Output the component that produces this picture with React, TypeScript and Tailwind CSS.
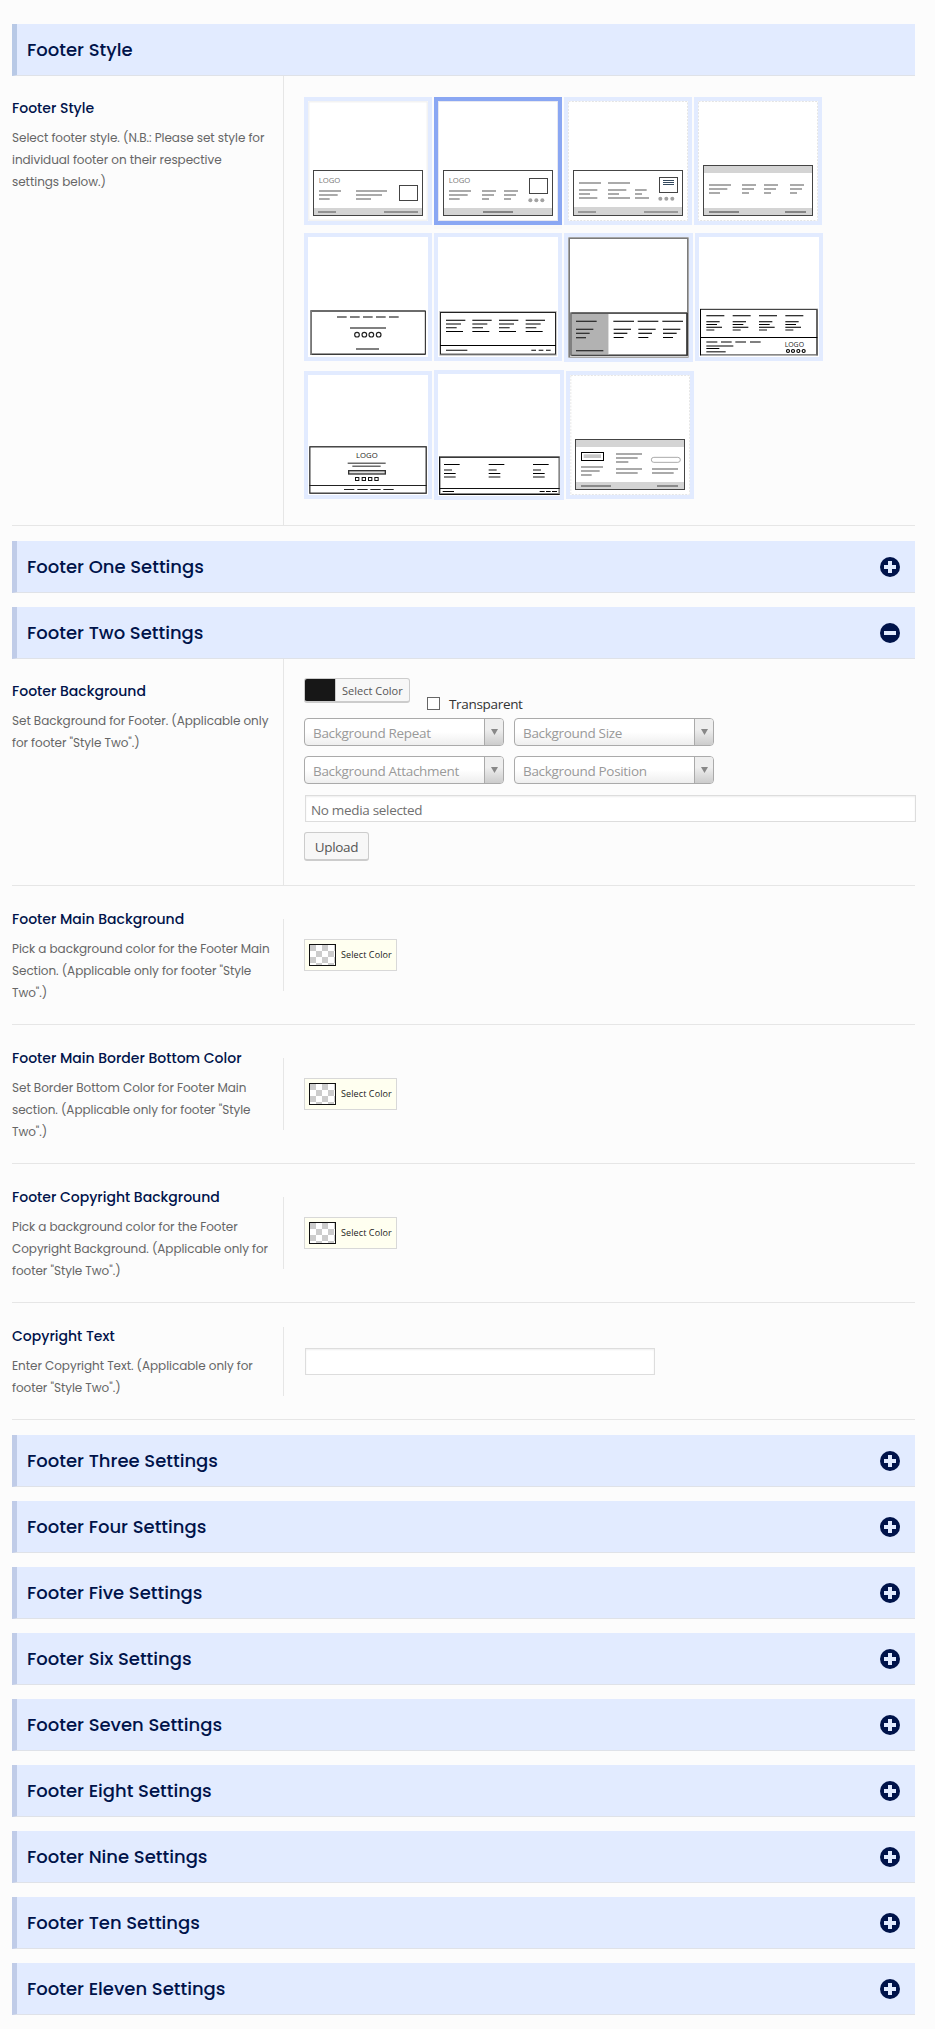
import type { ReactNode } from "react";

type Bar = [x: number, y: number, width: number];

function Bars({ items, color, h = 6 }: { items: Bar[]; color: string; h?: number }) {
  return (
    <>
      {items.map(([x, y, w], i) => (
        <rect key={i} x={x} y={y} width={w} height={h} fill={color} />
      ))}
    </>
  );
}

function Frame({ x, y, w, h, c = "#444", s = 3, fill = "none" }: { x: number; y: number; w: number; h: number; c?: string; s?: number; fill?: string }) {
  return <rect x={x + s / 2} y={y + s / 2} width={w - s} height={h - s} fill={fill} stroke={c} strokeWidth={s} />;
}

function Dots({ xs, y, r, fill = "none", stroke = "none" }: { xs: number[]; y: number; r: number; fill?: string; stroke?: string }) {
  return (
    <>
      {xs.map((x) => (
        <circle key={x} cx={x} cy={y} r={r} fill={fill} stroke={stroke} strokeWidth={stroke === "none" ? 0 : 3.5} />
      ))}
    </>
  );
}

function Logo({ x, y, w, color }: { x: number; y: number; w: number; color: string }) {
  return (
    <text x={x} y={y} textLength={w} lengthAdjust="spacingAndGlyphs" fill={color} className="font-['Open_Sans',sans-serif] text-[24px]">
      LOGO
    </text>
  );
}

function Tile({ box, size = "size-32", selected = false, children }: { box: string; size?: string; selected?: boolean; children: ReactNode }) {
  return (
    <button
      className={`${size} shrink-0 border-4 bg-white ${selected ? "border-[#8aa7f3] shadow-[0_4px_0_#f9f9f9]" : "border-[#e2ebff]"}`}
    >
      <svg viewBox={box} className="block size-full">
        {children}
      </svg>
    </button>
  );
}

function StylePicker() {
  return (
    <div className="flex flex-col">
      <div className="flex h-[136px] items-start gap-0.5">
        <Tile box="54 63 360 360">
          <Frame x={55} y={64} w={358} h={358} c="#eeeeee" />
          <Frame x={69} y={270} w={330} h={138} />
          <rect x={72} y={384} width={324} height={21} fill="#d4d4d4" />
          <Logo x={86} y={309} w={65} color="#777" />
          <Bars color="#aaa" items={[[87, 330, 66], [87, 342, 56], [87, 354, 32], [198, 330, 93], [198, 342, 78], [198, 354, 45]]} />
          <Bars color="#929292" items={[[84, 393, 54], [282, 393, 102]]} />
          <Frame x={327} y={315} w={57} h={48} />
        </Tile>
        <Tile box="444 63 360 360" selected>
          <Frame x={444} y={63} w={360} h={360} c="#e8e8f0" />
          <Frame x={459} y={270} w={330} h={138} />
          <rect x={462} y={384} width={324} height={21} fill="#d4d4d4" />
          <Logo x={476} y={309} w={65} color="#777" />
          <Bars
            color="#aaa"
            items={[[477, 330, 66], [477, 342, 56], [477, 354, 32], [576, 330, 42], [576, 342, 36], [576, 354, 21], [642, 330, 42], [642, 342, 36], [642, 354, 21]]}
          />
          <Bars color="#858585" items={[[579, 393, 90]]} />
          <Frame x={717} y={294} w={57} h={48} />
          <Dots xs={[721, 739, 757]} y={361} r={6} fill="#a2a2a2" />
        </Tile>
        <Tile box="24 63 360 360">
          <rect x={25.5} y={64.5} width={357} height={357} fill="none" stroke="#e4e4e4" strokeWidth={3} strokeDasharray="6 4" />
          <Frame x={39} y={270} w={330} h={138} />
          <rect x={42} y={381} width={324} height={24} fill="#d4d4d4" />
          <Bars
            color="#aaa"
            items={[[57, 306, 66], [144, 306, 66], [57, 327, 55], [57, 339, 33], [57, 351, 55], [144, 327, 55], [144, 339, 33], [144, 351, 66], [225, 327, 35], [225, 339, 21], [225, 351, 42]]}
          />
          <Bars color="#999" items={[[54, 393, 54], [252, 393, 102]]} />
          <Frame x={297} y={291} w={57} h={48} />
          <Bars color="#34495e" h={3} items={[[309, 300, 33], [309, 306, 33], [309, 312, 33]]} />
          <Dots xs={[301, 319, 337]} y={356} r={6} fill="#a2a2a2" />
        </Tile>
        <Tile box="414 63 360 360">
          <rect x={415.5} y={64.5} width={357} height={357} fill="none" stroke="#e4e4e4" strokeWidth={3} strokeDasharray="6 4" />
          <Frame x={429} y={255} w={330} h={153} />
          <rect x={432} y={258} width={324} height={21} fill="#d4d4d4" />
          <rect x={432} y={384} width={324} height={21} fill="#d4d4d4" />
          <Bars
            color="#aaa"
            items={[[447, 312, 66], [447, 324, 55], [447, 336, 33], [546, 312, 42], [546, 324, 36], [546, 336, 21], [612, 312, 42], [612, 324, 36], [612, 336, 21], [690, 312, 42], [690, 324, 36], [690, 336, 21]]}
          />
          <Bars color="#858585" items={[[447, 393, 90], [675, 393, 63]]} />
        </Tile>
      </div>
      <div className="flex h-[137px] items-start gap-0.5">
        <Tile box="54 36 360 360">
          <rect x={60} y={255} width={348} height={135} fill="#b5b5b5" />
          <rect x={66} y={261} width={339} height={123} fill="#fff" />
          <path d="M62 258H406V388H62" fill="none" stroke="#222" strokeWidth={3} />
          <path d="M63.500 257V389" stroke="#777" strokeWidth={5} />
          <Bars color="#808080" items={[[141, 273, 29], [180, 273, 29], [219, 273, 29], [258, 273, 29], [297, 273, 29], [180, 306, 108], [198, 369, 69]]} />
          <Dots xs={[201, 223, 244, 266]} y={329} r={7} stroke="#222" />
        </Tile>
        <Tile box="444 36 360 360">
          <rect x={448} y={258} width={352} height={134} fill="#b5b5b5" />
          <rect x={450} y={261} width={348} height={129} fill="#fff" />
          <Frame x={450} y={261} w={348} h={128} c="#222" />
          <rect x={450} y={360} width={348} height={3} fill="#000" />
          {[468, 547, 627, 707].map((x) => (
            <g key={x}>
              <rect x={x} y={284} width={58} height={4} fill="#333" />
              <rect x={x} y={294} width={45} height={6} fill="#808080" />
              <rect x={x} y={306} width={32} height={4} fill="#444" />
              <rect x={x} y={318} width={51} height={3} fill="#000" />
            </g>
          ))}
          <Bars color="#444" h={4} items={[[468, 374, 64], [724, 374, 14], [746, 374, 14], [768, 374, 14]]} />
        </Tile>
        <Tile box="24 36 363 363" size="size-[129px]">
          <Frame x={25} y={37} w={361} h={361} c="#7b7b7b" s={5} />
          <rect x={30} y={262} width={352} height={130} fill="#808080" />
          <rect x={36} y={267} width={343} height={121} fill="#fff" />
          <rect x={36} y={267} width={111} height={121} fill="#b2b2b2" />
          <rect x={144} y={267} width={3} height={121} fill="#ddd" />
          <path d="M34 264H382V391H34M380.500 264V391" fill="none" stroke="#333" strokeWidth={3} />
          <rect x={30} y={393} width={355} height={3} fill="#d4d4d4" />
          <Bars
            color="#333"
            h={4}
            items={[[48, 287, 62], [48, 311, 52], [48, 323, 41], [48, 336, 30], [48, 375, 82], [160, 287, 62], [233, 287, 62], [307, 287, 62]]}
          />
          {[161, 235, 309].map((x) => (
            <g key={x}>
              <rect x={x} y={311} width={52} height={4} fill="#333" />
              <rect x={x} y={323} width={41} height={4} fill="#222" />
              <rect x={x} y={336} width={30} height={3} fill="#000" />
            </g>
          ))}
        </Tile>
        <Tile box="417 36 360 360">
          <rect x={420} y={251} width={354} height={141} fill="#888" />
          <rect x={423} y={255} width={345} height={132} fill="#fff" />
          <path d="M421.500 253.500H771V391" fill="none" stroke="#444" strokeWidth={3} />
          <path d="M421.500 252V391M420 337.500H772" fill="none" stroke="#000" strokeWidth={3} />
          {[439, 518, 597, 676].map((x) => (
            <g key={x}>
              <rect x={x} y={270} width={54} height={4} fill="#333" />
              <rect x={x} y={288} width={40} height={4} fill="#333" />
              <rect x={x} y={297} width={32} height={3} fill="#000" />
              <rect x={x} y={305} width={47} height={4} fill="#333" />
              <rect x={x} y={312} width={24} height={6} fill="#888" />
            </g>
          ))}
          <Bars color="#808080" items={[[439, 348, 33], [483, 348, 32], [526, 348, 32], [570, 348, 32], [439, 360, 81]]} />
          <Bars color="#000" h={3} items={[[439, 369, 39], [439, 379, 58]]} />
          <Logo x={674} y={366} w={58} color="#222" />
          <Dots xs={[684, 699, 715, 731]} y={378} r={4.500} stroke="#000" />
        </Tile>
      </div>
      <div className="flex h-[130px] items-center gap-0.5">
        <Tile box="54 39 360 360">
          <rect x={58} y={252} width={353} height={144} fill="#999" />
          <rect x={61} y={256} width={346} height={136} fill="#fff" />
          <Frame x={58} y={253} w={352} h={142} c="#222" />
          <rect x={58} y={369} width={352} height={3} fill="#222" />
          <Logo x={198} y={288} w={65} color="#222" />
          <Bars color="#222" h={3} items={[[173, 302, 114], [187, 311, 85], [162, 381, 31], [202, 381, 31], [241, 381, 31], [280, 381, 31]]} />
          <Frame x={174} y={324} w={114} h={14} c="#333" s={4} fill="#ddd" />
          {[195, 215, 234, 253].map((x) => (
            <Frame key={x} x={x} y={345} w={13} h={12} c="#111" />
          ))}
        </Tile>
        <Tile box="444 36 366 366" size="size-[130px]">
          <Frame x={447} y={283} w={363} h={115} c="#888" s={5} />
          <path d="M448.500 285.500H808M448.500 284V397.500H809M448 379.500H809" fill="none" stroke="#111" strokeWidth={3} />
          {[462, 596, 729].map((x) => (
            <g key={x}>
              <rect x={x} y={306} width={47} height={3} fill="#000" />
              <rect x={x} y={321} width={24} height={6} fill="#888" />
              <rect x={x} y={333} width={35} height={3} fill="#000" />
              <rect x={x} y={342} width={35} height={6} fill="#888" />
            </g>
          ))}
          <Bars color="#000" h={3} items={[[458, 387, 34], [749, 387, 15], [768, 387, 14], [786, 387, 15]]} />
        </Tile>
        <Tile box="840 39 360 360">
          <rect x={842.500} y={40.500} width={356} height={357} fill="none" stroke="#e6e6e6" strokeWidth={3} strokeDasharray="6 4" />
          <Frame x={855} y={231} w={330} h={153} />
          <rect x={858} y={234} width={324} height={21} fill="#d4d4d4" />
          <rect x={858} y={360} width={324} height={21} fill="#d4d4d4" />
          <Frame x={873} y={270} w={69} h={27} c="#000" />
          <rect x={881} y={277} width={52} height={11} fill="#c6c6c6" />
          <Bars
            color="#aaa"
            items={[[873, 312, 66], [873, 324, 56], [873, 336, 32], [978, 273, 78], [978, 285, 65], [978, 297, 37], [978, 318, 78], [978, 330, 65], [1086, 318, 78], [1086, 330, 65]]}
          />
          <rect x={1084} y={286} width={87} height={15} rx={7.500} fill="#fff" stroke="#aaa" strokeWidth={3} />
          <Bars color="#8a8a8a" items={[[873, 369, 90], [1101, 369, 63]]} />
        </Tile>
      </div>
    </div>
  );
}

function SectionHeader({ title, state, className = "" }: { title: string; state?: "open" | "closed"; className?: string }) {
  return (
    <div
      className={`flex h-[52px] items-center justify-between border-b border-l-[5px] border-b-[#dfe2e8] bg-[#e2ebff] pr-[15px] pl-2.5 ${
        state ? "border-l-[#c0cce8]" : "border-l-[#b8c9e6]"
      } ${className}`}
    >
      <h2 className="text-[18px] leading-none font-medium text-[#00134a]">{title}</h2>
      {state && (
        <svg viewBox="0 0 20 20" className="size-5">
          <circle cx={10} cy={10} r={10} fill="#00134a" />
          <rect x={4} y={8} width={12} height={4} fill="#e2ebff" />
          {state === "closed" && <rect x={8} y={4} width={4} height={12} fill="#e2ebff" />}
        </svg>
      )}
    </div>
  );
}

function Field({ title, lines, className, bodyClass, children }: { title: string; lines: string[]; className: string; bodyClass: string; children: ReactNode }) {
  return (
    <div className={`flex border-b border-[#e6e6e6] ${className}`}>
      <div className="w-[271px] shrink-0">
        <h3 className="text-[14px] leading-5 font-medium whitespace-nowrap text-[#00134a]">{title}</h3>
        <p className="mt-[9px] text-[12px] leading-[22px] tracking-[-0.05px] whitespace-nowrap text-[#666]">
          {lines.map((line) => (
            <span key={line} className="block">
              {line}
            </span>
          ))}
        </p>
      </div>
      <div className={`grow border-l border-[#e6e6e6] pl-5 ${bodyClass}`}>{children}</div>
    </div>
  );
}

function ColorButton() {
  return (
    <button className="flex h-8 w-[93px] items-center border border-[#d8d8d8] bg-[#fffff0] pl-1 font-['Open_Sans',sans-serif] text-[9px] tracking-[0.1px] whitespace-nowrap text-[#222]">
      <svg viewBox="0 0 27 22" className="mr-[5px] h-[22px] w-[27px] shrink-0">
        <rect width={27} height={22} fill="#fff" />
        <path
          d="M1 1h6v6H1zM13 1h6v6h-6zM25 1h2v6h-2zM7 7h6v6H7zM19 7h6v6h-6zM1 13h6v6H1zM13 13h6v6h-6zM25 13h2v6h-2zM7 19h6v3H7zM19 19h6v3h-6z"
          fill="#ccc"
        />
        <rect x={0.500} y={0.500} width={26} height={21} fill="none" stroke="#111" />
      </svg>
      Select Color
    </button>
  );
}

function Select({ label }: { label: string }) {
  return (
    <div className="flex h-7 w-[200px] overflow-hidden rounded border border-[#aaa] bg-linear-to-t from-[#eee] to-white to-50%">
      <span className="grow pl-2 text-[13.500px] leading-[28px] text-[#999]">{label}</span>
      <span className="flex w-[19px] items-center justify-center border-l border-[#aaa] bg-linear-to-t from-[#ccc] to-[#eee] to-60%">
        <svg viewBox="0 0 7 6" className="h-1.5 w-[7px]">
          <path d="M0 0h7L3.500 6z" fill="#888" />
        </svg>
      </span>
    </div>
  );
}

function BackgroundControls() {
  return (
    <div className="font-['Open_Sans',sans-serif] tracking-[-0.32px]">
      <div className="flex h-10 items-start">
        <button className="flex h-[25px] w-[106px] overflow-hidden rounded-[3px] border border-b-2 border-[#ccc] bg-[#f7f7f7] text-[11px] leading-[24px] tracking-normal whitespace-nowrap text-[#555]">
          <span className="h-full w-[31px] shrink-0 border-r border-[#ccc] bg-[#171717]" />
          <span className="pl-1.5">Select Color</span>
        </button>
        <label className="mt-[19px] ml-[17px] flex items-start text-[13.500px] leading-[15px] text-[#333]">
          <span className="mr-[9px] size-[13px] border border-[#666] bg-white" />
          Transparent
        </label>
      </div>
      <div className="grid w-[410px] grid-cols-2 gap-2.5">
        <Select label="Background Repeat" />
        <Select label="Background Size" />
        <Select label="Background Attachment" />
        <Select label="Background Position" />
      </div>
      <div className="mt-[11px] -mr-px ml-px h-[27px] border border-[#ddd] bg-white pl-[5px] text-[13.500px] leading-[28px] text-[#707070] shadow-[inset_0_1px_2px_rgba(0,0,0,0.07)]">
        No media selected
      </div>
      <button className="mt-2.5 h-[29px] w-[65px] rounded-[3px] border border-b-2 border-[#ccc] bg-[#f7f7f7] text-[13.500px] leading-[28px] text-[#555]">
        Upload
      </button>
    </div>
  );
}

export default function App() {
  return (
    <main className="h-[2029px] bg-[#fcfcfc] pt-6 pr-5 pl-3 font-['Poppins','Inter',sans-serif]">
      <SectionHeader title="Footer Style" />
      <Field
        title="Footer Style"
        lines={["Select footer style. (N.B.: Please set style for", "individual footer on their respective", "settings below.)"]}
        className="h-[450px] *:first:pt-[22px]"
        bodyClass="pt-[21px]"
      >
        <StylePicker />
      </Field>
      <SectionHeader title="Footer One Settings" state="closed" className="mt-[15px]" />
      <SectionHeader title="Footer Two Settings" state="open" className="mt-3.5" />
      <Field
        title="Footer Background"
        lines={["Set Background for Footer. (Applicable only", 'for footer "Style Two".)']}
        className="h-[227px] *:first:pt-[22px]"
        bodyClass="pt-[19px]"
      >
        <BackgroundControls />
      </Field>
      <Field
        title="Footer Main Background"
        lines={["Pick a background color for the Footer Main", 'Section. (Applicable only for footer "Style', 'Two".)']}
        className="h-[139px] *:first:pt-[23px]"
        bodyClass="mt-[33px] h-[72px] pt-5"
      >
        <ColorButton />
      </Field>
      <Field
        title="Footer Main Border Bottom Color"
        lines={["Set Border Bottom Color for Footer Main", 'section. (Applicable only for footer "Style', 'Two".)']}
        className="h-[139px] *:first:pt-[23px]"
        bodyClass="mt-[33px] h-[72px] pt-5"
      >
        <ColorButton />
      </Field>
      <Field
        title="Footer Copyright Background"
        lines={["Pick a background color for the Footer", "Copyright Background. (Applicable only for", 'footer "Style Two".)']}
        className="h-[139px] *:first:pt-[23px]"
        bodyClass="mt-[33px] h-[72px] pt-5"
      >
        <ColorButton />
      </Field>
      <Field
        title="Copyright Text"
        lines={["Enter Copyright Text. (Applicable only for", 'footer "Style Two".)']}
        className="h-[117px] *:first:pt-[23px]"
        bodyClass="mt-6 h-[69px] pt-[21px]"
      >
        <input className="ml-px block h-[27px] w-[350px] border border-[#ddd] bg-white shadow-[inset_0_1px_2px_rgba(0,0,0,0.07)]" />
      </Field>
      <div className="mt-[15px] flex flex-col gap-3.5">
        {["Three", "Four", "Five", "Six", "Seven", "Eight", "Nine", "Ten", "Eleven"].map((name) => (
          <SectionHeader key={name} title={`Footer ${name} Settings`} state="closed" />
        ))}
      </div>
    </main>
  );
}
